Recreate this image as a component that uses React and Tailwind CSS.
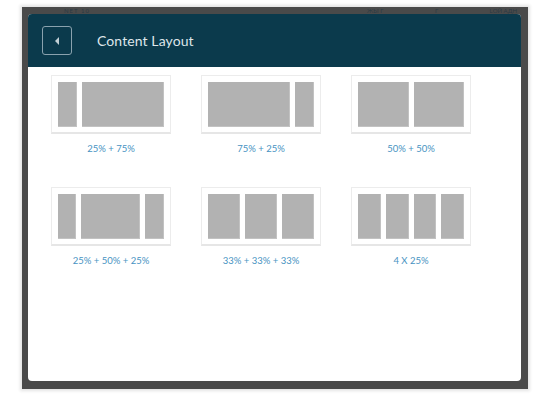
import React from 'react';

const layouts = [
  { label: '25% + 75%', cols: ['w-[19px]', 'flex-1'] },
  { label: '75% + 25%', cols: ['flex-1', 'w-[19px]'] },
  { label: '50% + 50%', cols: ['flex-1', 'flex-1'] },
  { label: '25% + 50% + 25%', cols: ['w-[18px]', 'flex-1', 'w-[19px]'] },
  { label: '33% + 33% + 33%', cols: ['flex-1', 'flex-1', 'flex-1'] },
  { label: '4 X 25%', cols: ['flex-1', 'flex-1', 'flex-1', 'flex-1'] },
];

function LayoutCard({ label, cols }) {
  return (
    <div className="flex flex-col items-center">
      <div className="w-[120px] h-[59px] border border-[#ececec] border-b-2 border-b-[#e6e6e6] bg-white p-[6px] pb-[5px] flex gap-[5px]">
        {cols.map((c, i) => (
          <div key={i} className={`${c} h-full bg-[#b2b2b2] border-r border-b border-[#c2c2c2]`} />
        ))}
      </div>
      <div className="mt-[9px] h-[12px] leading-[12px] text-[9.5px] text-[#4793c2] font-['Lato',sans-serif] whitespace-nowrap">
        {label}
      </div>
    </div>
  );
}

export default function App() {
  return (
    <div className="relative w-[550px] h-[411px] bg-white overflow-hidden font-['Lato',sans-serif]">
      <div className="ml-[22px] mt-[7px] w-[506px] h-[382px] bg-[#4a4a4a] pl-[6px] pr-[7px] pt-[7px] pb-[8px] shadow-[0_0_3px_2px_#e4e4e4]">
        <div className="h-full bg-white rounded-[4px] overflow-hidden flex flex-col">
          {/* header */}
          <div className="h-[53px] shrink-0 bg-[#0b3a4c] flex items-center pl-[14px]">
            <button className="w-[30px] h-[29px] border-[1.5px] border-[#8aa2ae] rounded-[3px] flex items-center justify-center">
              <span className="block w-0 h-0 border-y-[4px] border-y-transparent border-r-[4.5px] border-r-[#c2cfd5]" />
            </button>
            <h1 className="ml-[25px] text-[14px] text-[#dfe6ea] tracking-[0.1px]">Content Layout</h1>
          </div>

          {/* layouts */}
          <div className="pt-[8px] pl-[23px] grid grid-cols-[120px_120px_120px] gap-x-[30px] gap-y-[32px]">
            {layouts.map((l) => (
              <LayoutCard key={l.label} label={l.label} cols={l.cols} />
            ))}
          </div>
        </div>
      </div>

      {/* text of the page behind, peeking over the frame */}
      <div className="absolute left-[64px] top-[8px] text-[6px] leading-[6px] text-[#2a3a44] tracking-[1px]">
        NET 10
      </div>
      <div className="absolute left-[367px] top-[8px] w-[150px] text-[6px] leading-[6px] text-[#2a3a44] flex justify-between">
        <span>ЖЫ Г</span>
        <span>Г</span>
        <span>LОЙ АДН</span>
      </div>
    </div>
  );
}
